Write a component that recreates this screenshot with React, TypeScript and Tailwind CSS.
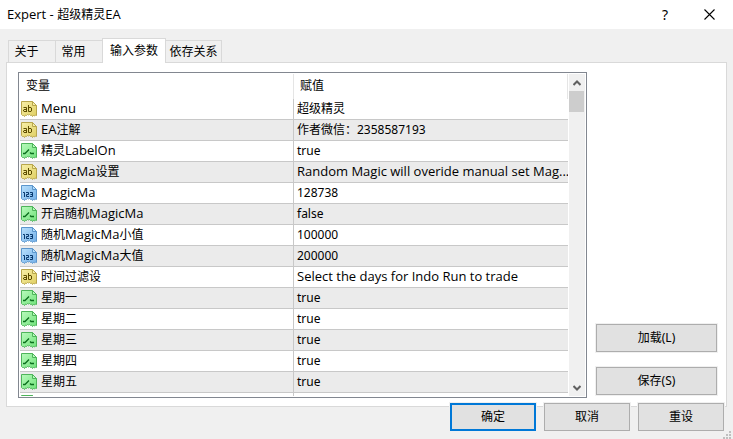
import { useState } from 'react'
import clsx from 'clsx'

type ParamType = 'text' | 'bool' | 'int'

interface Param { name: string; value: string; type: ParamType }

const TABS = [
  { label: '关于', width: 'w-12' },
  { label: '常用', width: 'w-12' },
  { label: '输入参数', width: 'w-16' },
  { label: '依存关系', width: 'w-14' },
]

const PARAMS: Param[] = [
  { name: 'Menu', value: '超级精灵', type: 'text' },
  { name: 'EA注解', value: '作者微信：2358587193', type: 'text' },
  { name: '精灵LabelOn', value: 'true', type: 'bool' },
  { name: 'MagicMa设置', value: 'Random Magic will overide manual set Mag...', type: 'text' },
  { name: 'MagicMa', value: '128738', type: 'int' },
  { name: '开启随机MagicMa', value: 'false', type: 'bool' },
  { name: '随机MagicMa小值', value: '100000', type: 'int' },
  { name: '随机MagicMa大值', value: '200000', type: 'int' },
  { name: '时间过滤设', value: 'Select the days for Indo Run to trade', type: 'text' },
  { name: '星期一', value: 'true', type: 'bool' },
  { name: '星期二', value: 'true', type: 'bool' },
  { name: '星期三', value: 'true', type: 'bool' },
  { name: '星期四', value: 'true', type: 'bool' },
  { name: '星期五', value: 'true', type: 'bool' },
  { name: '', value: '', type: 'bool' },
]

const ICON_COLORS: Record<ParamType, { light: string; fill: string; edge: string; ink: string }> = {
  text: { light: '#f7efa8', fill: '#e0cf62', edge: '#b8a64c', ink: '#5c4c00' },
  bool: { light: '#b8fabc', fill: '#70e27a', edge: '#4eb45a', ink: '#0a6e1c' },
  int: { light: '#b8e0fc', fill: '#74b0e8', edge: '#5c96cc', ink: '#08396e' },
}

// Latin runs are set one size above the Chinese text
function Mixed({ text }: { text: string }) {
  return (
    <span>
      {text.split(/([A-Za-z][A-Za-z .-]*)/).map((part, i) =>
        i % 2 ? <span key={i} className="font-['Open_Sans',sans-serif] text-[13px] leading-none">{part}</span> : part,
      )}
    </span>
  )
}

function ParamIcon({ type }: { type: ParamType }) {
  const c = ICON_COLORS[type]
  return (
    <svg width="16" height="16" viewBox="0 0 16 16" className="block shrink-0" aria-hidden="true">
      <defs>
        <linearGradient id={`fill-${type}`} x1="0" y1="0" x2="1" y2="1">
          <stop offset="0" stopColor={c.light} />
          <stop offset="1" stopColor={c.fill} />
        </linearGradient>
      </defs>
      <path
        d="M.5 .5H11.5L15.5 4.5V14.5L14.5 14L13.5 15L12.5 14.5L11.5 15.5L10.5 14L9.5 14.5L8.5 13.5L7.5 14L6.5 13.5L5.5 14.5L4.5 14L3.5 15.5L2.5 14.5L1.5 14.5L.5 13.5Z"
        fill={`url(#fill-${type})`}
        stroke={c.edge}
        strokeWidth="1"
      />
      <path d="M11.5 .5V4.5H15.5Z" fill={c.light} stroke={c.edge} />
      {type === 'bool' && <path d="M2 10.5H4L8 6.5M9 9.5L10 10.5H13" fill="none" stroke={c.ink} strokeWidth="1.3" />}
      {type === 'text' && (
        <path
          d="M2.5 6.5H5.5V11M5.5 8.5H3L2.5 9V10L3 10.5H5.5M7.5 4V10.5H10L10.5 10V7L10 6.5H7.5"
          fill="none"
          stroke={c.ink}
        />
      )}
      {type === 'int' && (
        <path
          d="M2 7.5H3.5V12M5 7.5H7.5V9.5H5.5V11.5H8M9 7.5H11.5V11.5H9M9.5 9.5H11.5"
          fill="none"
          stroke={c.ink}
        />
      )}
    </svg>
  )
}

function DialogButton({ label, primary, className }: { label: string; primary?: boolean; className?: string }) {
  return (
    <button
      type="button"
      className={clsx(
        'h-7 bg-[#e1e1e1] text-center leading-4 outline outline-[#f0f0f0]',
        primary ? 'border-2 border-[#0078d7]' : 'border border-[#adadad]',
        className,
      )}
    >
      {label}
    </button>
  )
}

function ScrollArrow({ down }: { down?: boolean }) {
  return (
    <button type="button" aria-label={down ? 'Down' : 'Up'} className="flex h-[17px] w-full items-center justify-center">
      <svg width="8" height="6" viewBox="0 0 8 6" className={clsx(down && 'rotate-180')}>
        <path d="M.5 5L4 1.5L7.5 5" fill="none" stroke="#606060" strokeWidth="2" />
      </svg>
    </button>
  )
}

export default function App() {
  const [tab, setTab] = useState(2)

  return (
    <div className="min-h-screen bg-[#f0f0f0] font-['Noto_Sans','Noto_Sans_CJK_SC',sans-serif] text-[12px] leading-4 text-black">
      <header className="flex h-[29px] items-center justify-between bg-white pr-[18px] pl-[7px]">
        <h1><Mixed text="Expert - 超级精灵EA" /></h1>
        <div className="flex items-center gap-9">
          <button type="button" aria-label="Help" className="text-[14px]">?</button>
          <button type="button" aria-label="Close">
            <svg width="11" height="11" viewBox="0 0 11 11" className="block">
              <path d="M.5 .5L10.5 10.5M10.5 .5L.5 10.5" stroke="#000" strokeWidth="1.1" />
            </svg>
          </button>
        </div>
      </header>

      <main className="px-[6px] pt-[9px]">
        <div role="tablist" className="flex items-end pl-0.5">
          {TABS.map((t, i) => (
            <button
              key={t.label}
              type="button"
              role="tab"
              aria-selected={tab === i}
              onClick={() => setTab(i)}
              className={clsx(
                'border-t border-[#d9d9d9] whitespace-nowrap',
                t.width,
                tab === i ? 'relative -mb-px h-[25px] border-x bg-white' : 'h-[22px]',
                i < 2 && '-mr-px border-l pr-3',
                i === 3 && 'border-r',
              )}
            >
              {t.label}
            </button>
          ))}
        </div>

        <section className="flex h-[345px] items-start border border-[#d9d9d9] bg-white pt-[9px] pr-[9px] pl-[11px]">
          <div className="flex h-[326px] flex-1 border border-[#828790] p-px">
            <div className="flex-1 overflow-hidden">
              <table className="w-full table-fixed border-separate border-spacing-0">
                <thead>
                  <tr className="h-[25px] text-left">
                    <th className="w-[274px] border-r border-[#e5e5e5] p-0 pb-0.5 pl-1.5 font-normal">变量</th>
                    <th className="border-r border-[#e5e5e5] p-0 pb-0.5 pl-1.5 font-normal">赋值</th>
                  </tr>
                </thead>
                <tbody>
                  {PARAMS.map((p, i) => (
                    <tr key={i} className="h-[21px] even:bg-[#ebebeb]">
                      <td className="border-r border-b border-[#c8c8c8] p-0">
                        <div className="flex items-center gap-1 pl-px">
                          <ParamIcon type={p.type} />
                          <Mixed text={p.name} />
                        </div>
                      </td>
                      <td className="overflow-hidden border-b border-[#c8c8c8] p-0 pl-[3px] whitespace-nowrap">
                        {p.type === 'text' ? <Mixed text={p.value} /> : p.value}
                      </td>
                    </tr>
                  ))}
                </tbody>
              </table>
            </div>
            <div className="ml-px flex w-4 flex-col bg-[#f0f0f0]">
              <ScrollArrow />
              <div className="mr-px h-[21px] bg-[#cdcdcd]" />
              <div className="flex-1" />
              <ScrollArrow down />
            </div>
          </div>
          <div className="ml-[9px] flex w-[121px] flex-col gap-[15px] self-end pb-[11px]">
            <DialogButton label="加载(L)" />
            <DialogButton label="保存(S)" />
          </div>
        </section>
      </main>

      <footer className="relative -mt-1 flex justify-end gap-2 pr-[9px]">
        <DialogButton label="确定" primary className="w-[86px]" />
        <DialogButton label="取消" className="w-[86px]" />
        <DialogButton label="重设" className="w-[86px]" />
        <svg width="8" height="8" viewBox="0 0 8 8" className="absolute right-0.5 -bottom-2" aria-hidden="true">
          <path d="M6 0h2v2H6zM3 3h2v2H3zM6 3h2v2H6zM0 6h2v2H0zM3 6h2v2H3zM6 6h2v2H6z" fill="#bfbfbf" />
        </svg>
      </footer>
    </div>
  )
}
